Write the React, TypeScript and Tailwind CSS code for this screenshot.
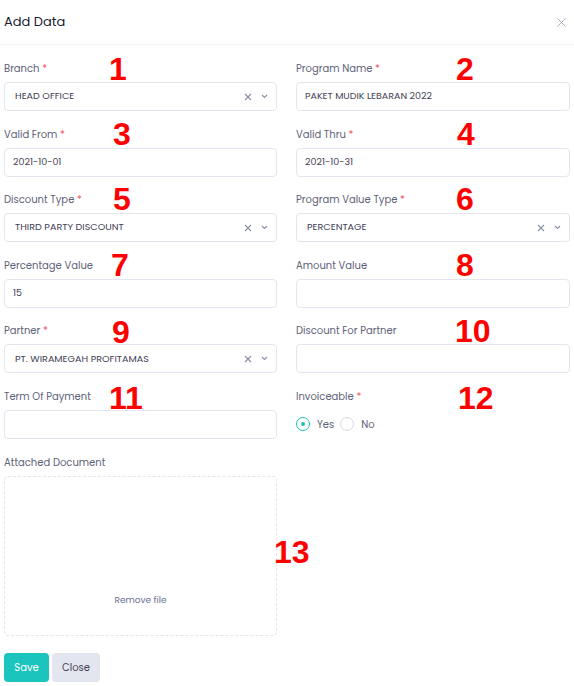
import React from "react";

const font = { fontFamily: "Poppins, 'Open Sans', 'Noto Sans', sans-serif" };

function Label({ text, req }: { text: string; req?: boolean }) {
  return (
    <div className="text-[10px] leading-[14px] text-[#5e6278] mb-[6px] whitespace-nowrap">
      {text}
      {req && <span className="text-[#f64e60]"> *</span>}
    </div>
  );
}

function Input({ value }: { value?: string }) {
  return (
    <div className="h-[29px] border border-[#e4e6ef] rounded-[4px] flex items-center px-[8px] text-[9.5px] text-[#3f4254]">
      {value}
    </div>
  );
}

function Select({ value }: { value: string }) {
  return (
    <div className="h-[29px] border border-[#e4e6ef] rounded-[4px] flex items-center pl-[10px] pr-[8px] text-[9.6px] text-[#3f4254]">
      <span className="flex-1">{value}</span>
      <svg width="8" height="8" viewBox="0 0 8 8" className="mr-[9px]">
        <path d="M1 1 L7 7 M7 1 L1 7" stroke="#8a8fa8" strokeWidth="1.1" />
      </svg>
      <svg width="7" height="5" viewBox="0 0 7 5">
        <path d="M1 1 L3.5 3.5 L6 1" stroke="#8a8fa8" strokeWidth="1.1" fill="none" />
      </svg>
    </div>
  );
}

function Num({ n, x, y }: { n: string; x: number; y: number }) {
  return (
    <div
      className="absolute text-[32px] leading-[32px] font-bold text-[#ff0000]"
      style={{ left: x, top: y - 4, fontFamily: "'Liberation Sans', Arial, sans-serif" }}
    >
      {n}
    </div>
  );
}

export default function App() {
  return (
    <div className="relative w-[574px] h-[686px] bg-white overflow-hidden" style={font}>
      <div className="h-[45px] border-b border-[#eff2f5] flex items-center justify-between px-[4px]">
        <div className="text-[13px] text-[#181c32]">Add Data</div>
        <svg width="9" height="9" viewBox="0 0 9 9" className="mr-[4px]">
          <path d="M0.5 0.5 L8.5 8.5 M8.5 0.5 L0.5 8.5" stroke="#a1a5b7" strokeWidth="0.9" />
        </svg>
      </div>
      <div className="pl-[4px] pr-[4px] pt-[17px]">
        <div className="grid grid-cols-[273px_274px] gap-x-[19px] gap-y-[16.6px]">
          <div><Label text="Branch" req /><Select value="HEAD OFFICE" /></div>
          <div><Label text="Program Name" req /><Input value="PAKET MUDIK LEBARAN 2022" /></div>
          <div><Label text="Valid From" req /><Input value="2021-10-01" /></div>
          <div><Label text="Valid Thru" req /><Input value="2021-10-31" /></div>
          <div><Label text="Discount Type" req /><Select value="THIRD PARTY DISCOUNT" /></div>
          <div><Label text="Program Value Type" req /><Select value="PERCENTAGE" /></div>
          <div><Label text="Percentage Value" /><Input value="15" /></div>
          <div><Label text="Amount Value" /><Input /></div>
          <div><Label text="Partner" req /><Select value="PT. WIRAMEGAH PROFITAMAS" /></div>
          <div><Label text="Discount For Partner" /><Input /></div>
          <div><Label text="Term Of Payment" /><Input /></div>
          <div>
            <Label text="Invoiceable" req />
            <div className="h-[29px] flex items-center text-[10px] text-[#5e6278]">
              <span className="w-[14px] h-[14px] rounded-full border border-[#1bc5bd] flex items-center justify-center">
                <span className="w-[4px] h-[4px] rounded-full bg-[#1bc5bd]" />
              </span>
              <span className="ml-[7px] mr-[6px]">Yes</span>
              <span className="w-[14px] h-[14px] rounded-full border border-[#d8dae3]" />
              <span className="ml-[7px]">No</span>
            </div>
          </div>
          <div>
            <Label text="Attached Document" />
            <div className="h-[160px] border border-dashed border-[#e4e6ef] rounded-[4px] flex flex-col justify-end items-center pb-[27px]">
              <span className="text-[9px] text-[#6c7293]">Remove file</span>
            </div>
          </div>
        </div>
        <div className="flex gap-[3px] mt-[17px]">
          <button className="h-[29px] w-[45px] rounded-[4px] bg-[#1bc5bd] text-white text-[10px]">Save</button>
          <button className="h-[29px] w-[48px] rounded-[4px] bg-[#e4e6ef] text-[#3f4254] text-[10px]">Close</button>
        </div>
      </div>
      <Num n="1" x={109} y={57} />
      <Num n="2" x={456} y={57} />
      <Num n="3" x={113} y={122} />
      <Num n="4" x={457} y={122} />
      <Num n="5" x={113} y={187} />
      <Num n="6" x={456} y={187} />
      <Num n="7" x={111} y={253} />
      <Num n="8" x={456} y={253} />
      <Num n="9" x={112} y={320} />
      <Num n="10" x={455} y={319} />
      <Num n="11" x={109} y={386} />
      <Num n="12" x={458} y={386} />
      <Num n="13" x={274} y={540} />
    </div>
  );
}
